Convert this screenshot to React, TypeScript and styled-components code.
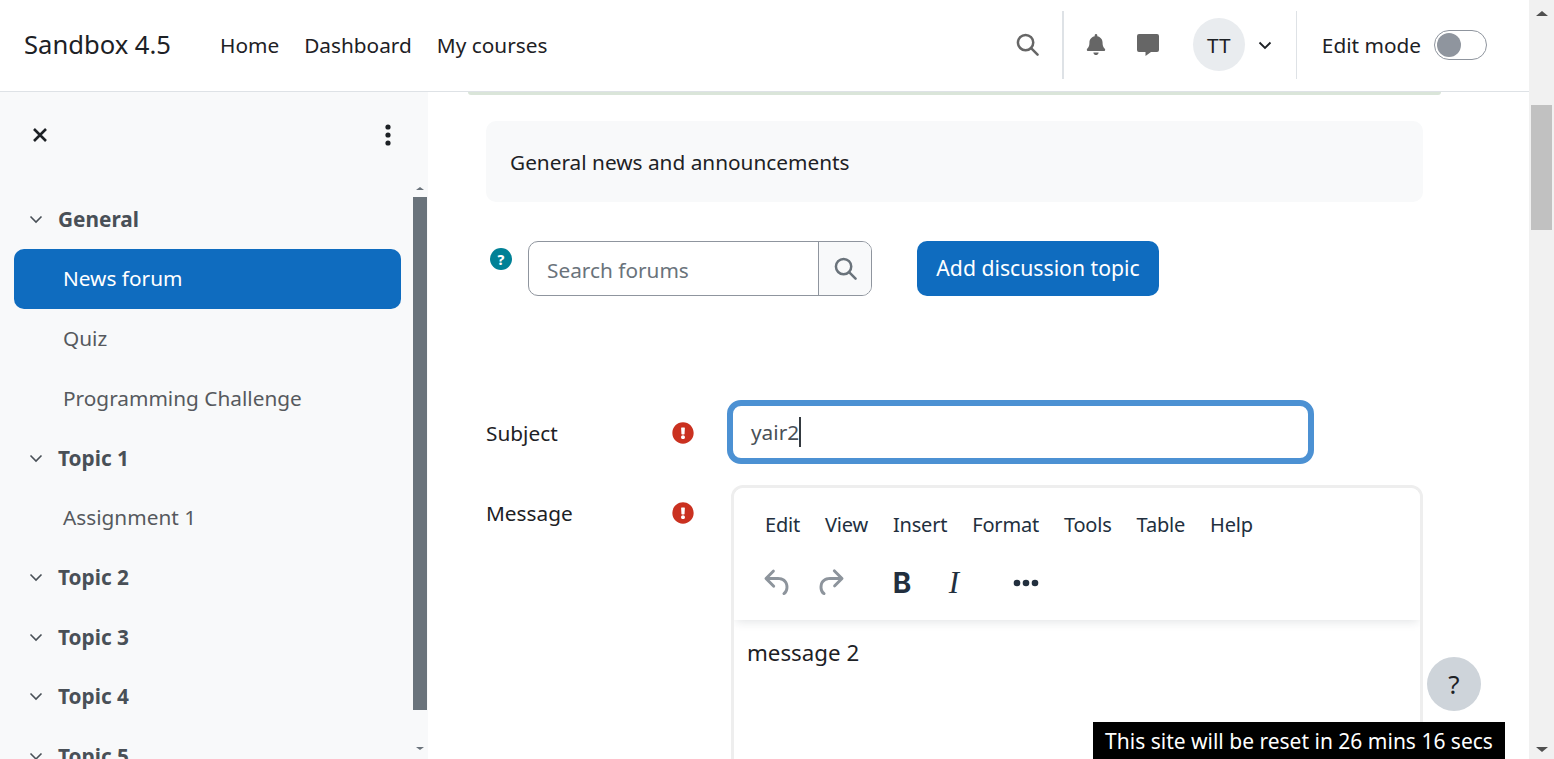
import styled, { createGlobalStyle } from "styled-components";
import { FaBell, FaExclamationCircle } from "react-icons/fa";

const Global = createGlobalStyle`
  html, body { margin: 0; height: 100%; overflow: hidden; background: #fff; }
  body { font-family: "Noto Sans", "Open Sans", sans-serif; font-size: 20.8px; color: #1d2125; }
  * { box-sizing: border-box; }
`;

const Page = styled.div`
  display: flex;
  height: 100vh;
  overflow: hidden;
`;

const Viewport = styled.div`
  flex: 1;
  min-width: 0;
  display: flex;
  flex-direction: column;
`;

const TopBar = styled.header`
  height: 92px;
  flex: none;
  display: flex;
  align-items: center;
  border-bottom: 1px solid #dee2e6;
  padding: 0 0 2px 24px;
  background: #fff;
`;

const Brand = styled.div`
  font-size: 25.6px;
  width: 196px;
`;

const NavLink = styled.a`
  margin-right: 25px;
`;

const Spacer = styled.div`
  flex: 1;
`;

const IconSlot = styled.div<{ $w: number; $color?: string }>`
  width: ${(p) => p.$w}px;
  display: flex;
  justify-content: center;
  align-items: center;
  color: ${(p) => p.$color || "#666"};
`;

const Divider = styled.div<{ $w?: number }>`
  width: ${(p) => p.$w || 1}px;
  height: 68px;
  background: #dee2e6;
`;

const Avatar = styled.div`
  width: 52px;
  height: 53px;
  border-radius: 50%;
  background: #e9ecef;
  display: flex;
  align-items: center;
  justify-content: center;
  margin-left: 34px;
`;

const EditLabel = styled.span`
  margin-left: 25px;
`;

const Toggle = styled.div`
  width: 53px;
  height: 30px;
  border: 1px solid #8f959e;
  border-radius: 15px;
  margin-left: 13px;
  margin-right: 42px;
  padding: 2px;
`;

const Knob = styled.div`
  width: 24px;
  height: 24px;
  border-radius: 50%;
  background: #8f959e;
`;

const Body = styled.div`
  flex: 1;
  min-height: 0;
  display: flex;
`;

const Drawer = styled.aside`
  width: 428px;
  flex: none;
  background: #f8f9fa;
  display: flex;
  flex-direction: column;
`;

const DrawerHead = styled.div`
  height: 86px;
  flex: none;
  display: flex;
  align-items: center;
  justify-content: space-between;
  padding: 0 37px 0 32px;
  margin-bottom: 7px;
`;

const DrawerScroll = styled.div`
  flex: 1;
  min-height: 0;
  display: flex;
`;

const CourseList = styled.div`
  flex: 1;
  min-width: 0;
  overflow: hidden;
  padding: 4.6px 12px 0 14px;
`;

const SectionRow = styled.div`
  height: 59.6px;
  display: flex;
  align-items: center;
  padding-left: 14px;
  font-weight: 700;
  color: #495057;
`;

const Chevron = styled.svg`
  width: 16px;
  height: 16px;
  margin-right: 14px;
  fill: none;
  stroke: #495057;
  stroke-width: 1.6;
`;

const ItemRow = styled.div<{ $active?: boolean }>`
  height: 59.6px;
  display: flex;
  align-items: center;
  padding: 0 0 1px 49px;
  border-radius: 10px;
  color: ${(p) => (p.$active ? "#fff" : "#56595e")};
  background: ${(p) => (p.$active ? "#0f6cbf" : "transparent")};
`;

const BarTrack = styled.div`
  width: 14px;
  margin-right: 1px;
  padding-top: 2px;
  flex: none;
  display: flex;
  flex-direction: column;
  align-items: center;
`;

const Arrow = styled.div<{ $down?: boolean; $size: number; $color: string }>`
  flex: none;
  width: 0;
  height: 0;
  border-left: ${(p) => p.$size}px solid transparent;
  border-right: ${(p) => p.$size}px solid transparent;
  ${(p) =>
    p.$down
      ? `border-top: ${p.$size - 1}px solid ${p.$color};`
      : `border-bottom: ${p.$size - 1}px solid ${p.$color};`}
`;

const DrawerThumb = styled.div`
  width: 14px;
  height: 513px;
  margin: 7px 0 37px;
  background: #6a737b;
`;

const Main = styled.main`
  flex: 1;
  min-width: 0;
  overflow: hidden;
  padding: 0 106px 0 58px;
`;

const GreenEdge = styled.div`
  height: 3px;
  margin: 0 -18px;
  background: #dae5d9;
  border-radius: 0 0 6px 6px;
`;

const Description = styled.div`
  margin-top: 26px;
  height: 81px;
  background: #f8f9fa;
  border-radius: 10px;
  display: flex;
  align-items: center;
  padding: 1px 0 0 24px;
`;

const SearchRow = styled.div`
  margin-top: 39px;
  display: flex;
  align-items: flex-start;
`;

const HelpBadge = styled.div`
  margin: 7px 16px 0 4px;
  width: 22px;
  height: 22px;
  flex: none;
  border-radius: 50%;
  background: #008196;
  color: #fff;
  font-size: 14px;
  font-weight: 800;
  display: flex;
  align-items: center;
  justify-content: center;
`;

const SearchBox = styled.div`
  width: 344px;
  height: 55px;
  border: 1px solid #8f959e;
  border-radius: 10px;
  display: flex;
  overflow: hidden;
`;

const SearchText = styled.div`
  flex: 1;
  display: flex;
  align-items: center;
  padding: 2px 0 0 18px;
  color: #6a737b;
`;

const SearchAddon = styled.div`
  width: 53px;
  border-left: 1px solid #8f959e;
  background: #f8f9fa;
  color: #6a737b;
  display: flex;
  align-items: center;
  justify-content: center;
`;

const PrimaryButton = styled.button`
  margin-left: 45px;
  width: 242px;
  height: 55px;
  border: 0;
  border-radius: 10px;
  padding: 0 0 2px;
  background: #0f6cbf;
  color: #fff;
  font: inherit;
  font-size: 21.2px;
`;

const FormRow = styled.div<{ $top: number }>`
  margin-top: ${(p) => p.$top}px;
  display: flex;
  align-items: flex-start;
`;

const FieldLabel = styled.div<{ $pt: number }>`
  width: 186px;
  flex: none;
  padding-top: ${(p) => p.$pt}px;
  line-height: 28px;
`;

const Required = styled.div<{ $pt: number }>`
  width: 22px;
  flex: none;
  margin-top: ${(p) => p.$pt}px;
  color: #ca3120;
  display: flex;
`;

const FieldCol = styled.div`
  flex: 1;
  min-width: 0;
  margin-left: 37px;
`;

const SubjectInput = styled.div`
  width: 587px;
  height: 64px;
  margin: -1px 0 0 -4px;
  border: 6px solid #4c91d3;
  border-radius: 14px;
  display: flex;
  align-items: center;
  padding-left: 18px;
  color: #495057;
`;

const Caret = styled.span`
  display: inline-block;
  width: 2px;
  height: 30px;
  background: #343a40;
`;

const Editor = styled.div`
  height: 420px;
  border: 3px solid #eee;
  border-radius: 12px;
  overflow: hidden;
`;

const EditorHead = styled.div`
  height: 132px;
  background: #fff;
  box-shadow: 0 3px 10px -2px rgba(34, 47, 62, 0.15);
`;

const MenuBar = styled.div`
  display: flex;
  gap: 25px;
  height: 70px;
  align-items: center;
  padding: 3px 0 0 31px;
  font-size: 20px;
  letter-spacing: -0.2px;
  color: #222f3e;
`;

const ToolBar = styled.div`
  display: flex;
  align-items: center;
  height: 50px;
  color: #222f3e;
`;

const ToolSlot = styled.div<{ $w: number }>`
  width: ${(p) => p.$w}px;
  display: flex;
  justify-content: center;
  flex: none;
`;

const BoldGlyph = styled.span`
  font: 700 28px "Inter", sans-serif;
`;

const ItalicGlyph = styled.span`
  font: italic 400 31px "Liberation Serif", serif;
`;

const EditorBody = styled.div`
  padding: 17px 0 0 13px;
  font-size: 22.3px;
`;

const HelpFab = styled.div`
  position: fixed;
  left: 1427px;
  top: 657px;
  width: 54px;
  height: 54px;
  border-radius: 50%;
  background: #ced4da;
  display: flex;
  align-items: center;
  justify-content: center;
  font-size: 26px;
`;

const ResetTimer = styled.div`
  position: fixed;
  left: 1093px;
  top: 722px;
  width: 412px;
  height: 37px;
  background: #000;
  color: #fff;
  display: flex;
  align-items: center;
  justify-content: center;
  font-size: 21px;
`;

const PageBar = styled.div`
  width: 25px;
  flex: none;
  background: #f1f1f1;
  display: flex;
  flex-direction: column;
  align-items: center;
  padding: 11px 0 7px;
`;

const PageThumb = styled.div`
  width: 21px;
  height: 125px;
  margin: 89px 0 auto;
  background: #c1c1c1;
`;

const ChevronDown = () => (
  <Chevron viewBox="0 0 16 16">
    <polyline points="2.5,5.5 8,11 13.5,5.5" />
  </Chevron>
);

const SearchGlyph = ({ size, stroke }: { size: number; stroke: string }) => (
  <svg width={size} height={size} viewBox="0 0 24 24" fill="none" stroke={stroke} strokeWidth="2.6" strokeLinecap="round">
    <circle cx="10" cy="10" r="8" />
    <path d="M16 16l6.5 6.5" />
  </svg>
);

const sidebar: { label: string; section?: boolean; active?: boolean }[] = [
  { label: "General", section: true },
  { label: "News forum", active: true },
  { label: "Quiz" },
  { label: "Programming Challenge" },
  { label: "Topic 1", section: true },
  { label: "Assignment 1" },
  { label: "Topic 2", section: true },
  { label: "Topic 3", section: true },
  { label: "Topic 4", section: true },
  { label: "Topic 5", section: true },
];

const menus = ["Edit", "View", "Insert", "Format", "Tools", "Table", "Help"];

export default function App() {
  return (
    <Page>
      <Global />
      <Viewport>
        <TopBar>
          <Brand>Sandbox 4.5</Brand>
          <NavLink>Home</NavLink>
          <NavLink>Dashboard</NavLink>
          <NavLink>My courses</NavLink>
          <Spacer />
          <IconSlot $w={24}>
            <SearchGlyph size={23} stroke="#666" />
          </IconSlot>
          <IconSlot $w={22} />
          <Divider $w={2} />
          <IconSlot $w={22} />
          <IconSlot $w={20}>
            <FaBell size={21} />
          </IconSlot>
          <IconSlot $w={31} />
          <IconSlot $w={22}>
            <svg width="22" height="22" viewBox="0 0 22 22" fill="#666">
              <path d="M2 0h18a2 2 0 0 1 2 2v14a2 2 0 0 1-2 2h-6l-5.5 4v-4H2a2 2 0 0 1-2-2V2a2 2 0 0 1 2-2z" />
            </svg>
          </IconSlot>
          <Avatar>TT</Avatar>
          <IconSlot $w={40} $color="#1d2125">
            <svg width="14" height="14" viewBox="0 0 14 14" fill="none" stroke="currentColor" strokeWidth="1.8">
              <polyline points="1.5,4.5 7,10 12.5,4.5" />
            </svg>
          </IconSlot>
          <IconSlot $w={11} />
          <Divider />
          <EditLabel>Edit mode</EditLabel>
          <Toggle>
            <Knob />
          </Toggle>
        </TopBar>
        <Body>
          <Drawer>
            <DrawerHead>
              <svg width="16" height="16" viewBox="0 0 16 16" stroke="#1d2125" strokeWidth="2.6">
                <path d="M2 2l12 12M14 2L2 14" />
              </svg>
              <svg width="6" height="22" viewBox="0 0 6 22" fill="#1d2125">
                <circle cx="3" cy="3" r="2.6" />
                <circle cx="3" cy="11" r="2.6" />
                <circle cx="3" cy="19" r="2.6" />
              </svg>
            </DrawerHead>
            <DrawerScroll>
              <CourseList>
                {sidebar.map((row) =>
                  row.section ? (
                    <SectionRow key={row.label}>
                      <ChevronDown />
                      {row.label}
                    </SectionRow>
                  ) : (
                    <ItemRow key={row.label} $active={row.active}>
                      {row.label}
                    </ItemRow>
                  )
                )}
              </CourseList>
              <BarTrack>
                <Arrow $size={4} $color="#6a737b" />
                <DrawerThumb />
                <Arrow $down $size={4} $color="#6a737b" />
              </BarTrack>
            </DrawerScroll>
          </Drawer>
          <Main>
            <GreenEdge />
            <Description>General news and announcements</Description>
            <SearchRow>
              <HelpBadge>?</HelpBadge>
              <SearchBox>
                <SearchText>Search forums</SearchText>
                <SearchAddon>
                  <SearchGlyph size={23} stroke="#6a737b" />
                </SearchAddon>
              </SearchBox>
              <PrimaryButton>Add discussion topic</PrimaryButton>
            </SearchRow>
            <FormRow $top={105}>
              <FieldLabel $pt={18}>Subject</FieldLabel>
              <Required $pt={21}>
                <FaExclamationCircle size={22} />
              </Required>
              <FieldCol>
                <SubjectInput>
                  yair2
                  <Caret />
                </SubjectInput>
              </FieldCol>
            </FormRow>
            <FormRow $top={21}>
              <FieldLabel $pt={14}>Message</FieldLabel>
              <Required $pt={17}>
                <FaExclamationCircle size={22} />
              </Required>
              <FieldCol>
                <Editor>
                  <EditorHead>
                    <MenuBar>
                      {menus.map((m) => (
                        <span key={m}>{m}</span>
                      ))}
                    </MenuBar>
                    <ToolBar>
                      <ToolSlot $w={22} />
                      <ToolSlot $w={44}>
                        <svg width="36" height="36" viewBox="0 0 24 24" fill="#8d949c">
                          <path d="M6.4 8H12c3.7 0 6.2 2 6.8 5.1.6 2.7-.4 5.6-2.3 6.8a1 1 0 0 1-1-1.8c1.1-.6 1.8-2.7 1.4-4.6-.5-2.1-2.1-3.5-4.9-3.5H6.4l3.3 3.3a1 1 0 1 1-1.4 1.4l-5-5a1 1 0 0 1 0-1.4l5-5a1 1 0 0 1 1.4 1.4L6.4 8Z" />
                        </svg>
                      </ToolSlot>
                      <ToolSlot $w={8} />
                      <ToolSlot $w={44}>
                        <svg width="36" height="36" viewBox="0 0 24 24" fill="#8d949c">
                          <path d="M17.6 10H12c-2.8 0-4.4 1.4-4.9 3.5-.4 2 .3 4 1.4 4.6a1 1 0 1 1-1 1.8c-2-1.2-2.9-4.1-2.3-6.8.6-3 3-5.1 6.8-5.1h5.6l-3.3-3.3a1 1 0 1 1 1.4-1.4l5 5a1 1 0 0 1 0 1.4l-5 5a1 1 0 0 1-1.4-1.4l3.3-3.3Z" />
                        </svg>
                      </ToolSlot>
                      <ToolSlot $w={28} />
                      <ToolSlot $w={44}>
                        <BoldGlyph>B</BoldGlyph>
                      </ToolSlot>
                      <ToolSlot $w={8} />
                      <ToolSlot $w={44}>
                        <ItalicGlyph>I</ItalicGlyph>
                      </ToolSlot>
                      <ToolSlot $w={28} />
                      <ToolSlot $w={44}>
                        <svg width="26" height="8" viewBox="0 0 26 8" fill="#222f3e">
                          <circle cx="4" cy="4" r="3.3" />
                          <circle cx="13" cy="4" r="3.3" />
                          <circle cx="22" cy="4" r="3.3" />
                        </svg>
                      </ToolSlot>
                    </ToolBar>
                  </EditorHead>
                  <EditorBody>message 2</EditorBody>
                </Editor>
              </FieldCol>
            </FormRow>
          </Main>
        </Body>
      </Viewport>
      <PageBar>
        <Arrow $size={6} $color="#505050" />
        <PageThumb />
        <Arrow $down $size={6} $color="#505050" />
      </PageBar>
      <HelpFab>?</HelpFab>
      <ResetTimer>This site will be reset in 26 mins 16 secs</ResetTimer>
    </Page>
  );
}
